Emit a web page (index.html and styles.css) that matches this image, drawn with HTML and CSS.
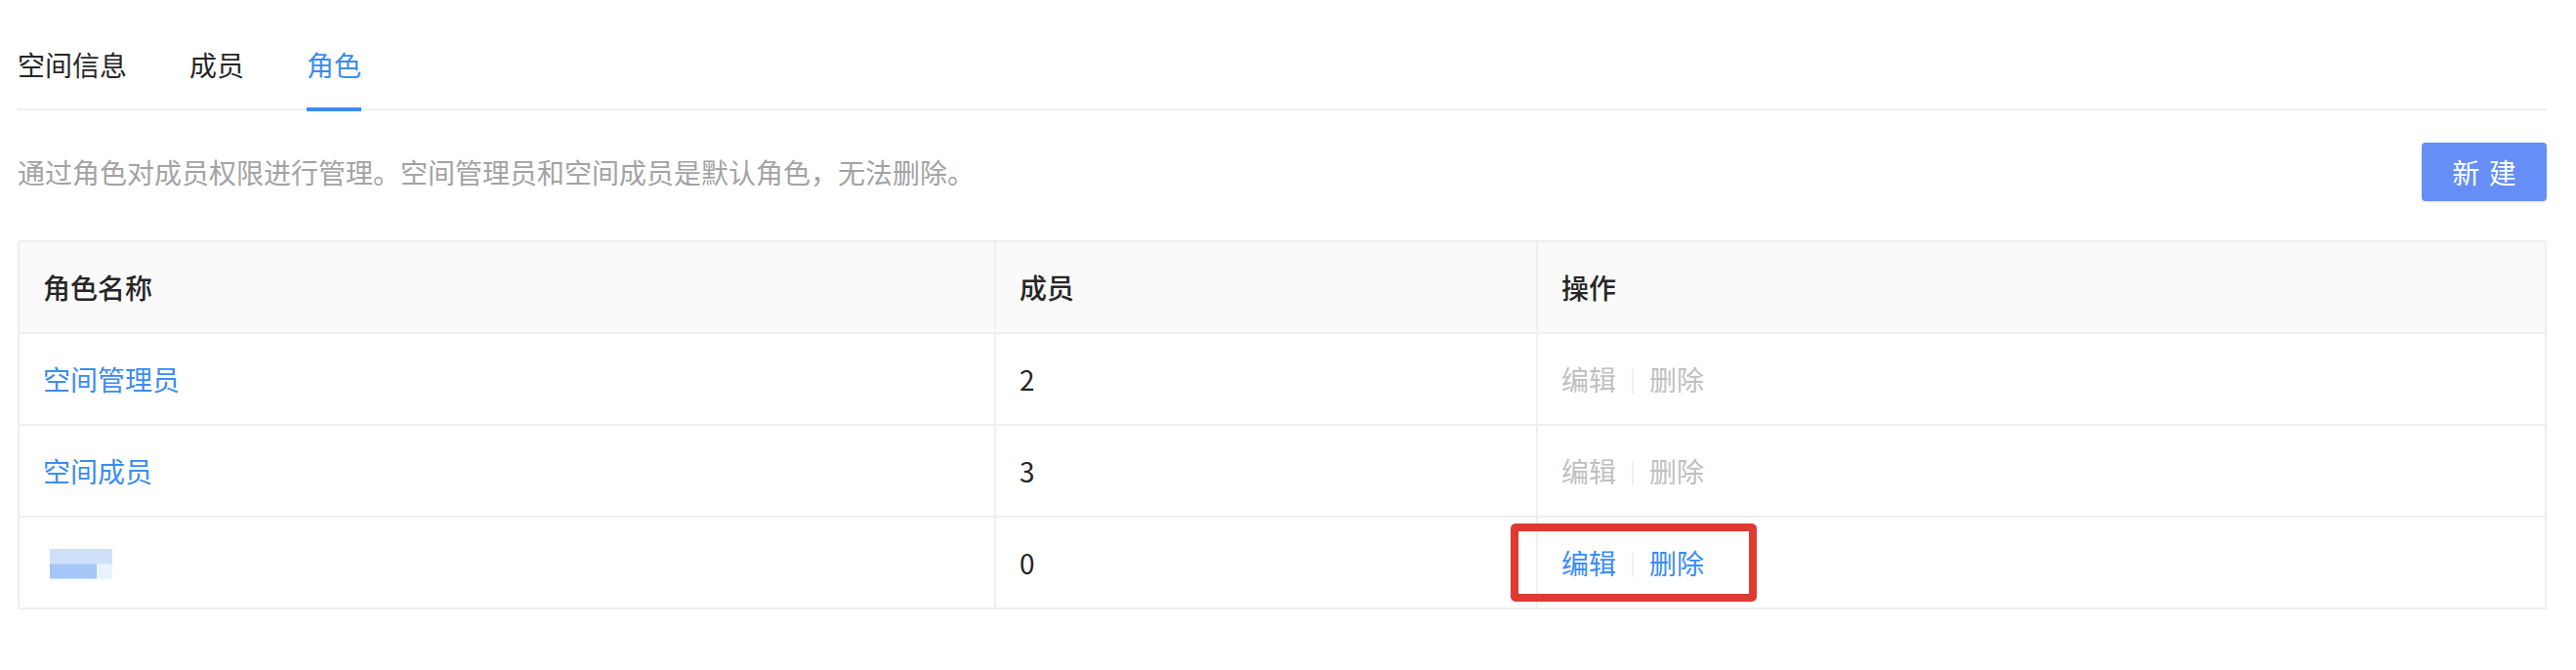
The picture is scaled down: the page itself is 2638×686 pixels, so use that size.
FILE: index.html
```html
<!DOCTYPE html>
<html lang="zh-CN">
<head>
<meta charset="utf-8">
<title>角色</title>
<link rel="stylesheet" href="styles.css">
</head>
<body>
<div class="page">
  <div class="tabs">
    <div class="tab">空间信息</div>
    <div class="tab">成员</div>
    <div class="tab active">角色<span class="ink"></span></div>
  </div>

  <div class="toolbar">
    <p class="desc">通过角色对成员权限进行管理。空间管理员和空间成员是默认角色，无法删除。</p>
    <button class="btn-primary" type="button"><span>新建</span></button>
  </div>

  <div class="roles">
    <div class="cell head">角色名称</div>
    <div class="cell head">成员</div>
    <div class="cell head">操作</div>

    <div class="cell"><a class="link">空间管理员</a></div>
    <div class="cell">2</div>
    <div class="cell"><span class="act disabled">编辑</span><span class="divider"></span><span class="act disabled">删除</span></div>

    <div class="cell"><a class="link">空间成员</a></div>
    <div class="cell">3</div>
    <div class="cell"><span class="act disabled">编辑</span><span class="divider"></span><span class="act disabled">删除</span></div>

    <div class="cell"><span class="redacted"></span></div>
    <div class="cell">0</div>
    <div class="cell marked"><span class="act">编辑</span><span class="divider"></span><span class="act">删除</span><span class="highlight"></span></div>
  </div>
</div>
</body>
</html>
```

FILE: styles.css
```css
* {
  box-sizing: border-box;
}

html, body {
  margin: 0;
  background: #ffffff;
}

body {
  font-family: "Noto Sans CJK SC", "Noto Sans", sans-serif;
  font-size: 28px;
  line-height: 44px;
  color: #262626;
}

.page {
  padding: 21px 30px 0 18px;
}

/* Tabs */
.tabs {
  display: flex;
  border-bottom: 2px solid #f0f0f0;
}

.tab {
  position: relative;
  padding: 23px 0;
  margin-right: 64px;
  color: #262626;
}

.tab.active {
  color: #3a8cf4;
}

.ink {
  position: absolute;
  left: 0;
  right: 0;
  bottom: -3px;
  height: 4px;
  background: #3a8cf4;
}

/* Toolbar */
.toolbar {
  display: flex;
  align-items: center;
  justify-content: space-between;
  margin-top: 33px;
  height: 60px;
}

.desc {
  margin: 0;
  color: #a3a3a3;
}

.btn-primary {
  width: 128px;
  height: 60px;
  padding: 0;
  border: none;
  border-radius: 4px;
  background: #658ef6;
  color: #ffffff;
  font-family: inherit;
  font-size: 28px;
  line-height: 44px;
  box-shadow: 0 2px 0 rgba(0, 0, 0, 0.04);
}

.btn-primary span {
  letter-spacing: 0.34em;
  margin-right: -0.34em;
}

/* Table */
.roles {
  display: grid;
  grid-template-columns: 1000px 555px 1fr;
  margin-top: 40px;
  border-top: 2px solid #efefef;
  border-left: 2px solid #efefef;
  border-radius: 4px 4px 0 0;
}

.cell {
  padding: 24px 24px;
  border-right: 2px solid #efefef;
  border-bottom: 2px solid #efefef;
  min-height: 94px;
  white-space: nowrap;
}

.cell.head {
  background: #fafafa;
  font-weight: 500;
  color: #262626;
}

.cell.marked {
  position: relative;
}

.link {
  color: #3a8cf4;
  text-decoration: none;
}

.act {
  color: #3a8cf4;
}

.act.disabled {
  color: #c0c0c0;
}

.divider {
  display: inline-block;
  width: 2px;
  height: 25px;
  margin: 0 16px;
  vertical-align: middle;
  position: relative;
  top: -2px;
  background: #f0f0f0;
}

.redacted {
  display: inline-block;
  width: 64px;
  height: 31px;
  margin-left: 7px;
  vertical-align: middle;
  position: relative;
  top: -3px;
  background:
    linear-gradient(#cfe0fb, #cfe0fb) top left / 100% 50% no-repeat,
    linear-gradient(#a4c7f8, #a4c7f8) bottom left / 48px 50% no-repeat,
    #eaf2fe;
  filter: blur(0.7px);
}

.highlight {
  position: absolute;
  left: -28px;
  top: 6px;
  width: 252px;
  height: 80px;
  border: 8px solid #e0392f;
  border-radius: 5px;
}
```
